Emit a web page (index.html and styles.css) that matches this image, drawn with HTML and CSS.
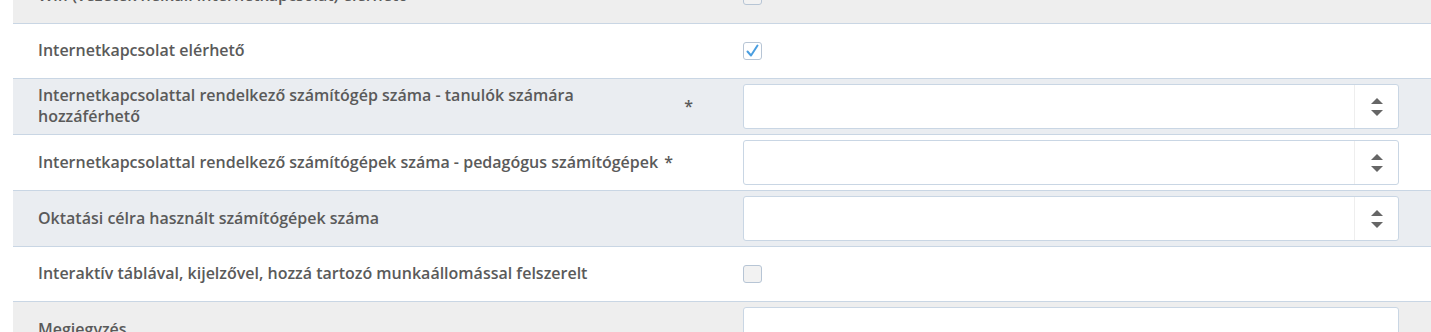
FILE: index.html
```html
<!DOCTYPE html>
<html lang="hu">
<head>
    <meta charset="UTF-8">
    <meta name="viewport" content="width=device-width, initial-scale=1.0">
    <title>Informatikai eszközök</title>
    <link rel="stylesheet" href="styles.css">
</head>
<body>
    <div class="form-list">
        <div class="form-row plain">
            <div class="label-cell"><span class="label-text">Wifi (vezeték nélküli internetkapcsolat) elérhető</span></div>
            <div class="field-cell"><span class="checkbox"></span></div>
        </div>
        <div class="form-row white">
            <div class="label-cell"><span class="label-text">Internetkapcsolat elérhető</span></div>
            <div class="field-cell">
                <span class="checkbox checked">
                    <svg viewBox="0 0 17 16" width="17" height="16"><path d="M3.5 8.5 L7 12.5 L13.5 2.5" fill="none" stroke="#4a9ee0" stroke-width="2" stroke-linecap="round" stroke-linejoin="round"/></svg>
                </span>
            </div>
        </div>
        <div class="form-row">
            <div class="label-cell wide"><span class="label-text">Internetkapcsolattal rendelkező számítógép száma - tanulók számára hozzáférhető</span><span class="req">*</span></div>
            <div class="field-cell">
                <div class="number-input"><input class="field" type="text"><span class="spin"><i class="up"></i><i class="down"></i></span></div>
            </div>
        </div>
        <div class="form-row white">
            <div class="label-cell"><span class="label-text">Internetkapcsolattal rendelkező számítógépek száma - pedagógus számítógépek</span><span class="req">*</span></div>
            <div class="field-cell">
                <div class="number-input"><input class="field" type="text"><span class="spin"><i class="up"></i><i class="down"></i></span></div>
            </div>
        </div>
        <div class="form-row">
            <div class="label-cell"><span class="label-text">Oktatási célra használt számítógépek száma</span></div>
            <div class="field-cell">
                <div class="number-input"><input class="field" type="text"><span class="spin"><i class="up"></i><i class="down"></i></span></div>
            </div>
        </div>
        <div class="form-row white">
            <div class="label-cell"><span class="label-text">Interaktív táblával, kijelzővel, hozzá tartozó munkaállomással felszerelt</span></div>
            <div class="field-cell"><span class="checkbox"></span></div>
        </div>
        <div class="form-row plain">
            <div class="label-cell top"><span class="label-text">Megjegyzés</span></div>
            <div class="field-cell top"><textarea class="note"></textarea></div>
        </div>
    </div>
</body>
</html>
```

FILE: styles.css
```css
body {
    margin: 0;
    background: #fff;
    font-family: 'Open Sans', 'Liberation Sans', sans-serif;
    font-size: 16px;
    color: #5a5a5a;
}
.form-list {
    margin: -31px 0 0 13px;
}
.form-row {
    display: grid;
    grid-template-columns: 730px 656px;
    background: #eaedf1;
    border-bottom: 1px solid #c9d6e4;
    padding: 5px 0;
    min-height: 44px;
}
.form-row.white { background: #fff; }
.form-row.plain { background: #eeeeee; }
.label-cell {
    display: flex;
    align-items: center;
    gap: 6px;
    padding: 0 50px 1px 25px;
    font-weight: 600;
    line-height: 21px;
}
.label-cell.wide .label-text { flex: 1; }
.label-cell.top, .field-cell.top { align-items: flex-start; }
.label-cell.top { padding-top: 12px; }
.field-cell {
    display: flex;
    align-items: center;
}
.checkbox {
    display: block;
    width: 17px;
    height: 16px;
    border: 1px solid #b7c5d5;
    border-radius: 3px;
    background: #f2f2f2;
}
.checkbox.checked { background: #fff; }
.checkbox svg { display: block; }
.number-input {
    display: flex;
    width: 100%;
    height: 45px;
    box-sizing: border-box;
    border: 1px solid #c9d6e4;
    border-radius: 3px;
    background: #fff;
}
.field {
    flex: 1;
    border: 0;
    outline: 0;
    background: transparent;
    font: inherit;
}
.spin {
    width: 43px;
    border-left: 1px solid #eee;
    display: flex;
    flex-direction: column;
    align-items: center;
    justify-content: center;
    gap: 6px;
}
.spin i {
    display: block;
    width: 0;
    height: 0;
    border-left: 6px solid transparent;
    border-right: 6px solid transparent;
}
.spin .up { border-bottom: 6px solid #666; }
.spin .down { border-top: 6px solid #666; }
.note {
    display: block;
    width: 100%;
    height: 80px;
    box-sizing: border-box;
    border: 1px solid #c9d6e4;
    border-radius: 3px;
    resize: none;
}
```
